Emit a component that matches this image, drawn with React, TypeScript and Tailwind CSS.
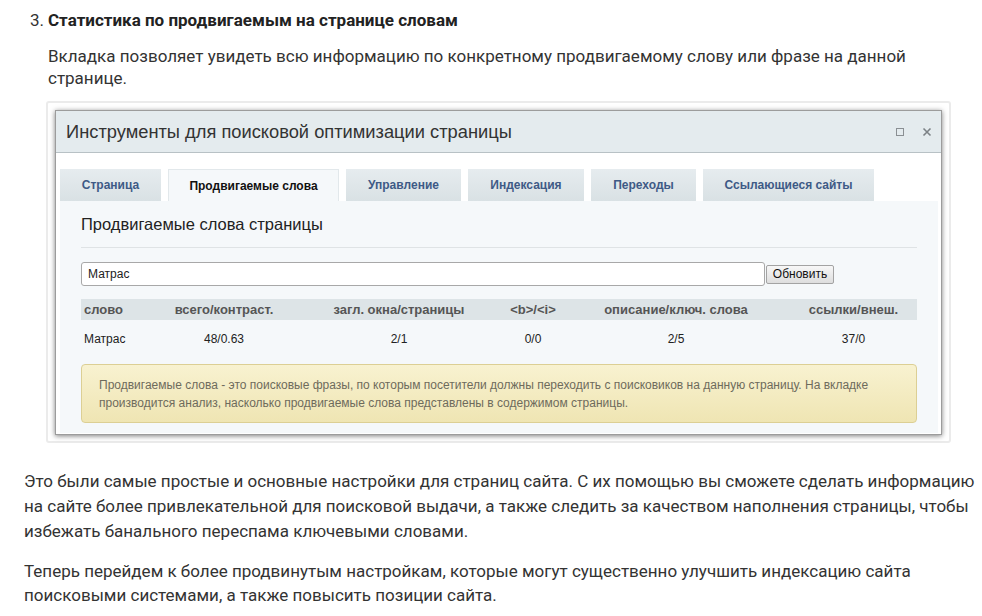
const tabs = [
  { label: 'Страница', w: 'w-[101px]', active: false },
  { label: 'Продвигаемые слова', w: 'w-[171px]', active: true },
  { label: 'Управление', w: 'w-[115px]', active: false },
  { label: 'Индексация', w: 'w-[116px]', active: false },
  { label: 'Переходы', w: 'w-[105px]', active: false },
  { label: 'Ссылающиеся сайты', w: 'w-[171px]', active: false },
];

const headers = ['слово', 'всего/контраст.', 'загл. окна/страницы', '<b>/<i>', 'описание/ключ. слова', 'ссылки/внеш.'];
const row = ['Матрас', '48/0.63', '2/1', '0/0', '2/5', '37/0'];

export default function App() {
  return (
    <div className="w-[982px] h-[616px] overflow-hidden bg-white text-[#333] font-['Roboto',sans-serif]">
      {/* list item */}
      <div className="pl-[30px] pt-[8px] flex text-[17px] leading-[24px]">
        <span className="w-[18px]">3.</span>
        <span className="font-bold text-[#222]">Статистика по продвигаемым на странице словам</span>
      </div>
      <p className="pl-[48px] mt-[13px] text-[17px] leading-[22px] whitespace-nowrap">
        Вкладка позволяет увидеть всю информацию по конкретному продвигаемому слову или фразе на данной
        <br />
        странице.
      </p>

      {/* screenshot frame */}
      <div className="ml-[46px] mt-[12px] w-[905px] h-[342px] border-2 border-[#ebebeb] rounded-[3px] pt-[7px] pl-[7px]">
        <div className="w-[887px] h-[325px] border border-[#9c9c9c] shadow-[0_1px_5px_rgba(0,0,0,0.5)] bg-white flex flex-col font-['Liberation_Sans',Arial,sans-serif]">
          {/* title bar */}
          <div className="h-[42px] shrink-0 bg-[#e4ebee] border-b border-[#b8c1c5] flex items-center pl-[10px] pr-[9px]">
            <span className="text-[18.3px] text-[#333] flex-1">Инструменты для поисковой оптимизации страницы</span>
            <span className="w-[8px] h-[8px] border border-[#8a8f93] mr-[18px]" />
            <svg width="10" height="10" viewBox="0 0 10 10">
              <path d="M1.5 1.5 L8.5 8.5 M8.5 1.5 L1.5 8.5" stroke="#7c8286" strokeWidth="1.6" />
            </svg>
          </div>

          {/* tabs */}
          <div className="pt-[16px] pl-[4px] flex gap-[7px] h-[48px] shrink-0">
            {tabs.map((t) => (
              <div
                key={t.label}
                className={
                  t.active
                    ? `${t.w} h-[32px] bg-[#f5f8fa] border-t border-x border-[#e2e8eb] flex items-center justify-center text-[12px] font-bold text-[#111]`
                    : `${t.w} h-[32px] bg-gradient-to-b from-[#e6ecef] to-[#d9e1e4] flex items-center justify-center text-[12px] font-bold text-[#3e5a86]`
                }
              >
                {t.label}
              </div>
            ))}
          </div>

          {/* content panel */}
          <div className="ml-[4px] w-[878px] h-[232px] bg-[#f5f8fa] px-[21px]">
            <div className="h-[47px] flex items-center pt-[1px] text-[16.5px] text-[#222] border-b border-[#dfe3e5]">
              Продвигаемые слова страницы
            </div>
            <div className="mt-[14px] flex items-center">
              <div className="w-[684px] h-[24px] bg-white border border-[#a8a8a8] rounded-[3px] flex items-center pl-[6px] text-[12px] text-[#222]">
                Матрас
              </div>
              <div className="ml-[1px] w-[68px] h-[19px] bg-gradient-to-b from-[#f7f7f7] to-[#dedede] border border-[#a3a3a3] rounded-[2px] flex items-center justify-center text-[12px] text-[#111]">
                Обновить
              </div>
            </div>
            <div className="mt-[13px] grid grid-cols-[69px_148px_202px_66px_220px_135px] h-[21px] bg-[#dde4e7] items-center text-[13px] font-bold text-[#555]">
              {headers.map((h, i) => (
                <div key={h} className={i === 0 ? 'pl-[3px]' : 'text-center'}>
                  {h}
                </div>
              ))}
            </div>
            <div className="grid grid-cols-[69px_148px_202px_66px_220px_135px] h-[38px] items-center text-[12px] text-[#222]">
              {row.map((v, i) => (
                <div key={i} className={i === 0 ? 'pl-[3px]' : 'text-center'}>
                  {v}
                </div>
              ))}
            </div>
            <div className="mt-[6px] h-[59px] rounded-[4px] border border-[#dccf94] bg-gradient-to-b from-[#f8f2d0] to-[#efe5b3] pl-[17px] pr-[20px] pt-[11px] text-[12px] leading-[18px] text-[#6e6b5c]">
              Продвигаемые слова - это поисковые фразы, по которым посетители должны переходить с поисковиков на данную страницу. На вкладке
              производится анализ, насколько продвигаемые слова представлены в содержимом страницы.
            </div>
          </div>
        </div>
      </div>

      {/* bottom paragraphs */}
      <p className="pl-[24px] mt-[26px] text-[17px] leading-[25px] whitespace-nowrap">
        Это были самые простые и основные настройки для страниц сайта. С их помощью вы сможете сделать информацию
        <br />
        на сайте более привлекательной для поисковой выдачи, а также следить за качеством наполнения страницы, чтобы
        <br />
        избежать банального переспама ключевыми словами.
      </p>
      <p className="pl-[24px] mt-[15px] text-[17px] leading-[24px] whitespace-nowrap">
        Теперь перейдем к более продвинутым настройкам, которые могут существенно улучшить индексацию сайта
        <br />
        поисковыми системами, а также повысить позиции сайта.
      </p>
    </div>
  );
}
